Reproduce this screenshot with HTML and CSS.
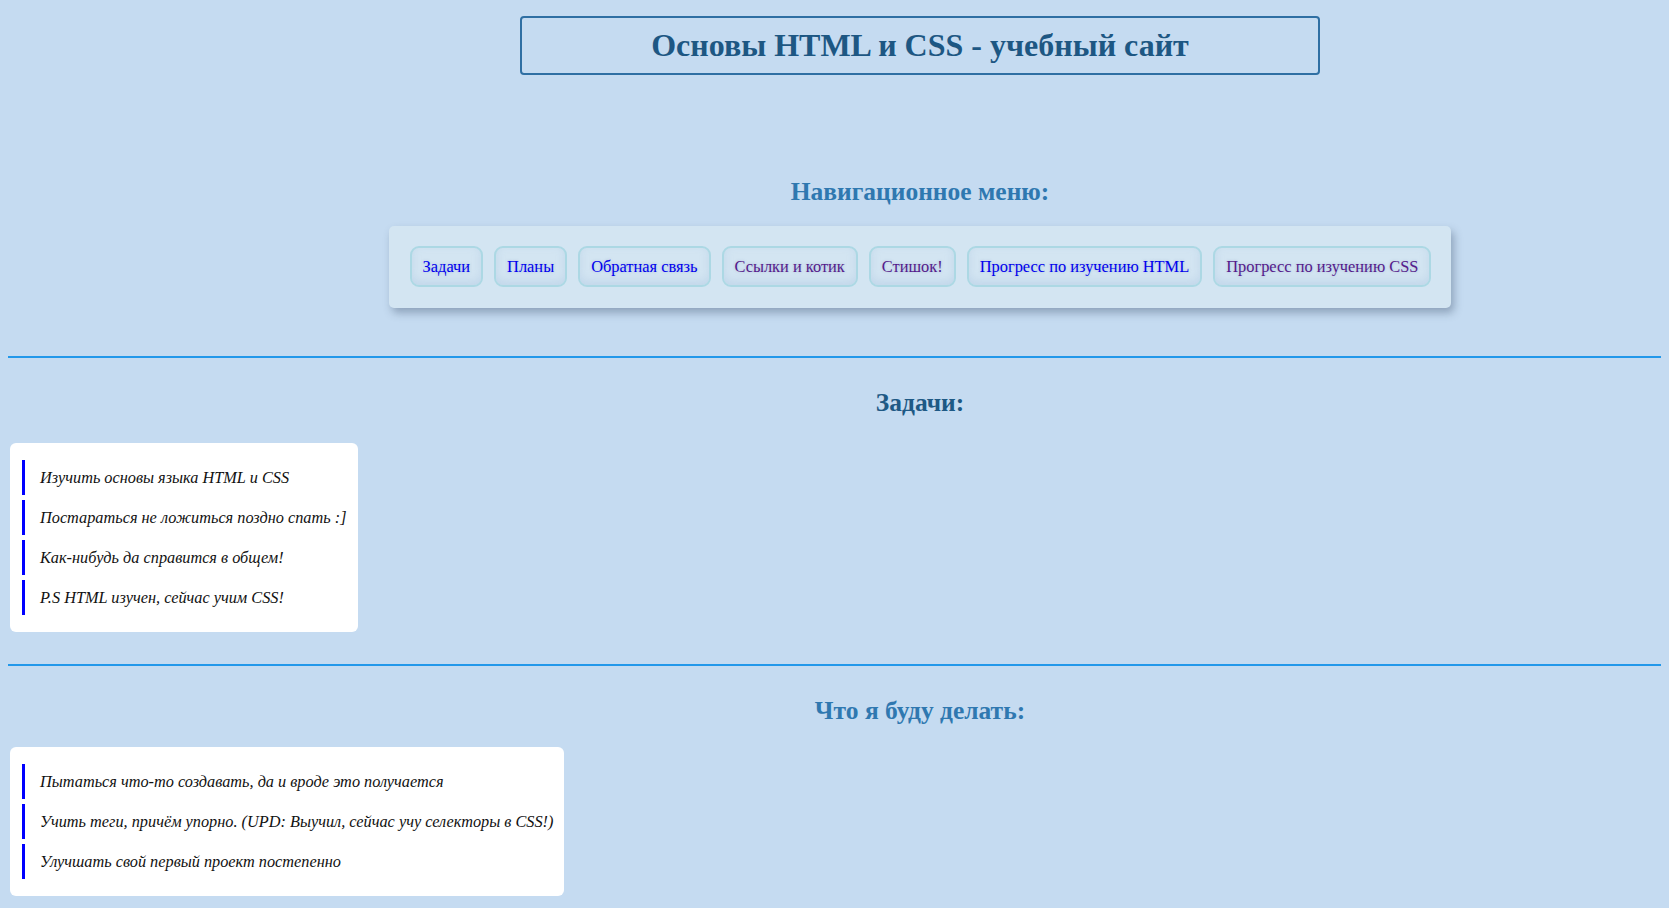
FILE: index.html
```html
<!DOCTYPE html>
<html lang="ru">
<head>
<meta charset="utf-8">
<title>Основы HTML и CSS</title>
<link rel="stylesheet" href="styles.css">
</head>
<body>
<div class="page">
  <header class="site-header">
    <h1 class="site-title">Основы HTML и CSS - учебный сайт</h1>
  </header>

  <section class="nav-section">
    <h2 class="heading heading-light">Навигационное меню:</h2>
    <nav class="nav-panel">
      <a class="nav-btn" href="#tasks">Задачи</a>
      <a class="nav-btn" href="#plans">Планы</a>
      <a class="nav-btn" href="#feedback">Обратная связь</a>
      <a class="nav-btn visited" href="#links">Ссылки и котик</a>
      <a class="nav-btn visited" href="#poem">Стишок!</a>
      <a class="nav-btn" href="#html">Прогресс по изучению HTML</a>
      <a class="nav-btn visited" href="#css">Прогресс по изучению CSS</a>
    </nav>
  </section>

  <hr class="divider divider-first">

  <section class="block" id="tasks">
    <h2 class="heading heading-dark">Задачи:</h2>
    <ul class="card-list">
      <li class="card-item">Изучить основы языка HTML и CSS</li>
      <li class="card-item">Постараться не ложиться поздно спать :]</li>
      <li class="card-item">Как-нибудь да справится в общем!</li>
      <li class="card-item">P.S HTML изучен, сейчас учим CSS!</li>
    </ul>
  </section>

  <hr class="divider divider-second">

  <section class="block" id="plans">
    <h2 class="heading heading-light">Что я буду делать:</h2>
    <ul class="card-list">
      <li class="card-item">Пытаться что-то создавать, да и вроде это получается</li>
      <li class="card-item">Учить теги, причём упорно. (UPD: Выучил, сейчас учу селекторы в CSS!)</li>
      <li class="card-item">Улучшать свой первый проект постепенно</li>
    </ul>
  </section>
</div>
</body>
</html>
```

FILE: styles.css
```css
html {
  overflow: hidden;
}

body {
  margin: 8px;
  background: #c5dbf1;
  font-family: "Liberation Serif", "DejaVu Serif", serif;
}

.page {
  width: 1824px;
}

.site-header {
  display: flex;
  justify-content: center;
}

.site-title {
  box-sizing: border-box;
  width: 800px;
  height: 59px;
  margin: 8px 0 0;
  border: 2px solid #2f6fa3;
  border-radius: 4px;
  font-size: 32px;
  line-height: 55px;
  font-weight: bold;
  text-align: center;
  color: #1d5783;
}

.heading {
  margin: 0;
  text-align: center;
  font-size: 25.5px;
  font-weight: bold;
  line-height: 28px;
}

.heading-light {
  color: #2f78b0;
}

.heading-dark {
  color: #1e5985;
}

.nav-section {
  display: flex;
  flex-direction: column;
  align-items: center;
  padding-top: 103px;
}

.nav-panel {
  display: flex;
  gap: 11px;
  margin-top: 20px;
  padding: 20px 20px 21px 21px;
  background: #d3e5f2;
  border-radius: 5px;
  box-shadow: 3px 5px 9px rgba(40, 60, 90, 0.35);
}

.nav-btn {
  display: block;
  padding: 10px 11px;
  border: 2px solid #acd8e4;
  border-radius: 9px;
  font-size: 16.4px;
  line-height: 17px;
  color: #0000ee;
  text-decoration: none;
  text-shadow: 0 0 3px rgba(90, 110, 160, 0.35);
  box-shadow: inset 0 -4px 8px rgba(160, 190, 220, 0.35);
}

.nav-btn.visited {
  color: #551a8b;
}

.divider {
  height: 0;
  margin: 48px 0 0;
  border: 0;
  border-top: 2px solid #2398ea;
}

.divider-second {
  margin-top: 32px;
}

.block {
  display: flex;
  flex-direction: column;
  align-items: flex-start;
}

.block .heading {
  align-self: stretch;
  margin-top: 31px;
}

.card-list {
  margin: 26px 0 0 2px;
  padding: 17px 11px 17px 12px;
  list-style: none;
  background: #ffffff;
  border-radius: 6px;
}

#plans .card-list {
  margin-top: 22px;
}

.card-item {
  height: 35px;
  margin-bottom: 5px;
  padding-left: 15px;
  border-left: 3px solid #0000ff;
  font-size: 16.3px;
  line-height: 35px;
  font-style: italic;
  color: #111111;
  white-space: nowrap;
}

.card-item:last-child {
  margin-bottom: 0;
}
```
